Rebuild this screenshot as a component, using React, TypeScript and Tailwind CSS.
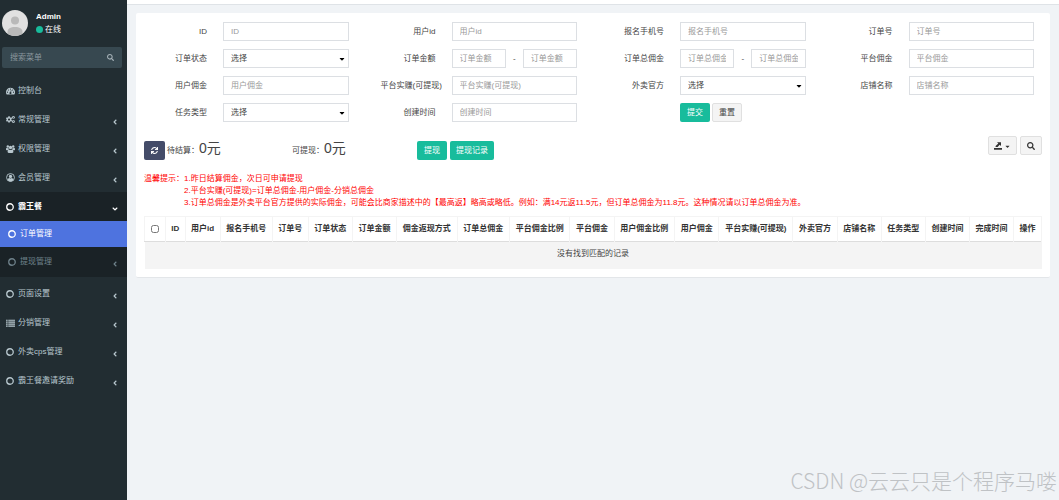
import type { ReactNode } from "react";
import { FaAngleDown, FaAngleLeft, FaCaretDown, FaCogs, FaSearch, FaSync } from "react-icons/fa";

const inputClass =
  "h-[19px] w-full min-w-0 border border-[#dcdfe3] bg-white px-[7px] text-[8px] text-[#444] placeholder:text-[#999] outline-none";

const columns = [
  "ID",
  "用户id",
  "报名手机号",
  "订单号",
  "订单状态",
  "订单金额",
  "佣金返现方式",
  "订单总佣金",
  "平台佣金比例",
  "平台佣金",
  "用户佣金比例",
  "用户佣金",
  "平台实赚(可提现)",
  "外卖官方",
  "店铺名称",
  "任务类型",
  "创建时间",
  "完成时间",
  "操作",
];

function CircleIcon() {
  return (
    <svg viewBox="0 0 16 16" className="size-2 shrink-0" fill="none" stroke="currentColor" strokeWidth="2.600" aria-hidden="true">
      <circle cx="8" cy="8" r="6.500" />
    </svg>
  );
}

function ListIcon() {
  return (
    <svg viewBox="0 0 16 14" className="h-2 w-[9px]" fill="currentColor" aria-hidden="true">
      <path d="M0 1h3v2H0zM4 1h12v2H4zM0 4.500h3v2H0zM4 4.500h12v2H4zM0 8h3v2H0zM4 8h12v2H4zM0 11.500h3v2H0zM4 11.500h12v2H4z" />
    </svg>
  );
}

function DashboardIcon() {
  return (
    <svg viewBox="0 0 16 14" className="h-2 w-[9px]" aria-hidden="true">
      <path d="M8 1a8 8 0 0 0-8 8c0 1.500.4 3 1.200 4.200h13.600A8 8 0 0 0 8 1z" fill="currentColor" />
      <g fill="#222d32">
        <circle cx="2.700" cy="9" r="1" />
        <circle cx="4.300" cy="5.200" r="1" />
        <circle cx="8" cy="3.600" r="1" />
        <circle cx="11.700" cy="5.200" r="1" />
        <circle cx="13.300" cy="9" r="1" />
        <path d="M8.700 5.200l1 .2-.7 3.600a1.900 1.900 0 1 1-1.100-.3z" />
      </g>
    </svg>
  );
}

function GroupIcon() {
  return (
    <svg viewBox="0 0 18 16" className="h-2 w-[9px]" fill="currentColor" aria-hidden="true">
      <circle cx="3.600" cy="3" r="2.400" />
      <circle cx="14.400" cy="3" r="2.400" />
      <circle cx="9" cy="5" r="3.300" />
      <path d="M0 9.500C0 7 .6 5.600 1.500 5.600c1 .8 2.200.9 3.400.6.100 1.200.5 2 1.100 2.800-1.200 0-2 .5-2.600 1.300H1.300C.5 10.300 0 10 0 9.500zM18 9.500c0-2.500-.6-3.900-1.500-3.900-1 .8-2.200.9-3.400.6-.1 1.200-.5 2-1.100 2.800 1.200 0 2 .5 2.600 1.300h2.100c.8 0 1.300-.3 1.300-.8z" />
      <path d="M3.200 13.600c0-2.400.8-4.600 2.800-4.600 1.900 1.500 4.100 1.500 6 0 2 0 2.800 2.200 2.800 4.600 0 1.400-.9 2.200-2.200 2.200H5.400c-1.300 0-2.200-.8-2.200-2.200z" />
    </svg>
  );
}

function UserIcon() {
  return (
    <svg viewBox="0 0 16 16" className="size-[9px]" aria-hidden="true">
      <circle cx="8" cy="8" r="7" fill="none" stroke="currentColor" strokeWidth="1.600" />
      <circle cx="8" cy="6.200" r="2.900" fill="currentColor" />
      <path d="M2.800 12.300C3.300 10 4.700 9 5.900 8.900c1.200.9 3 .9 4.200 0 1.200.1 2.600 1.100 3.100 3.400C11.900 14 10 15 8 15s-3.900-1-5.200-2.700z" fill="currentColor" />
    </svg>
  );
}

function MenuItem({ icon, label, arrow = true }: { icon: ReactNode; label: string; arrow?: boolean }) {
  return (
    <a href="#" className="flex h-[29px] items-center pl-[6px] pr-2 text-[#b8c7ce]">
      <span className="flex w-3 items-center text-[9px]">{icon}</span>
      <span className="flex-1">{label}</span>
      {arrow && <FaAngleLeft className="mt-1 text-[8px]" />}
    </a>
  );
}

function Sidebar() {
  return (
    <aside className="w-[127px] shrink-0 bg-[#222d32]">
      <div className="flex items-center gap-2 px-[2px] pt-[10px]">
        <svg viewBox="0 0 26 26" className="size-[26px] rounded-full" aria-hidden="true">
          <rect width="26" height="26" fill="#e1e1e1" />
          <circle cx="13" cy="10.500" r="4" fill="#b9b9b9" />
          <path d="M5.500 26v-4c0-3.500 3-5 7.500-5s7.500 1.500 7.500 5v4z" fill="#b9b9b9" />
        </svg>
        <div className="leading-[13px] text-white">
          <p className="font-bold">Admin</p>
          <p className="flex items-center gap-[2px]">
            <span className="size-[7px] rounded-full bg-[#18bc9c]" />
            在线
          </p>
        </div>
      </div>

      <form className="ml-[2px] mr-[5px] mt-[11px] flex h-[21px] items-center rounded-xs bg-[#374850] px-2">
        <input
          aria-label="搜索菜单"
          placeholder="搜索菜单"
          className="min-w-0 flex-1 bg-transparent text-[8px] text-white placeholder:text-[#8a979e] outline-none"
        />
        <button type="button" aria-label="搜索" className="text-[#a5b1b7]">
          <FaSearch className="size-[7px]" />
        </button>
      </form>

      <nav className="mt-2">
        <MenuItem icon={<DashboardIcon />} label="控制台" arrow={false} />
        <MenuItem icon={<FaCogs />} label="常规管理" />
        <MenuItem icon={<GroupIcon />} label="权限管理" />
        <MenuItem icon={<UserIcon />} label="会员管理" />
        <a href="#" className="flex h-[29px] items-center bg-[#1a2226] pl-[6px] pr-2 text-white">
          <span className="flex w-3 items-center">
            <CircleIcon />
          </span>
          <span className="flex-1 font-bold">霸王餐</span>
          <FaAngleDown className="mt-1 text-[8px]" />
        </a>
        <div className="bg-[#1a2226]">
          <a href="#" className="flex h-[26px] items-center gap-1 bg-[#4e73df] pl-2 text-white">
            <CircleIcon />
            订单管理
          </a>
          <a href="#" className="flex h-[30px] items-center gap-1 pl-2 pr-2 text-[#6f828b]">
            <CircleIcon />
            <span className="flex-1">提现管理</span>
            <FaAngleLeft className="mt-1 text-[8px]" />
          </a>
        </div>
        <div className="mt-[2px]">
          <MenuItem icon={<CircleIcon />} label="页面设置" />
          <MenuItem icon={<ListIcon />} label="分销管理" />
          <MenuItem icon={<CircleIcon />} label="外卖cps管理" />
          <MenuItem icon={<CircleIcon />} label="霸王餐邀请奖励" />
        </div>
      </nav>
    </aside>
  );
}

function Field({ id, label, children }: { id: string; label: string; children?: ReactNode }) {
  return (
    <div className="flex items-center gap-4 px-4">
      <label htmlFor={id} className="w-[55px] shrink-0 whitespace-nowrap text-right">
        {label}
      </label>
      <div className="min-w-0 flex-1">{children ?? <input id={id} placeholder={label} className={inputClass} />}</div>
    </div>
  );
}

function SelectBox({ id }: { id: string }) {
  return (
    <div className="relative">
      <select id={id} className={`${inputClass} block appearance-none`}>
        <option>选择</option>
      </select>
      <FaCaretDown className="pointer-events-none absolute right-[3px] top-[6px] size-2 text-black" />
    </div>
  );
}

function RangeBox({ id, label }: { id: string; label: string }) {
  return (
    <div className="flex items-center">
      <input id={id} placeholder={label} className={inputClass} />
      <span className="w-[17px] shrink-0 text-center">-</span>
      <input aria-label={label} placeholder={label} className={inputClass} />
    </div>
  );
}

function SearchForm() {
  return (
    <form className="grid grid-cols-4 gap-y-2">
      <Field id="f-id" label="ID" />
      <Field id="f-user" label="用户id" />
      <Field id="f-phone" label="报名手机号" />
      <Field id="f-no" label="订单号" />
      <Field id="f-status" label="订单状态">
        <SelectBox id="f-status" />
      </Field>
      <Field id="f-amount" label="订单金额">
        <RangeBox id="f-amount" label="订单金额" />
      </Field>
      <Field id="f-total" label="订单总佣金">
        <RangeBox id="f-total" label="订单总佣金" />
      </Field>
      <Field id="f-platform" label="平台佣金" />
      <Field id="f-commission" label="用户佣金" />
      <Field id="f-profit" label="平台实赚(可提现)" />
      <Field id="f-source" label="外卖官方">
        <SelectBox id="f-source" />
      </Field>
      <Field id="f-shop" label="店铺名称" />
      <Field id="f-type" label="任务类型">
        <SelectBox id="f-type" />
      </Field>
      <Field id="f-time" label="创建时间" />
      <div className="flex gap-[2px] pl-[87px]">
        <button type="button" className="h-[19px] rounded-xs bg-[#18bc9c] px-[7px] text-white">
          提交
        </button>
        <button type="button" className="h-[19px] rounded-xs border border-[#e0e0e0] bg-[#f4f4f4] px-[6px]">
          重置
        </button>
      </div>
    </form>
  );
}

function Toolbar() {
  return (
    <div className="mt-[14px] flex items-start justify-between">
      <div className="mt-[5px] flex h-[19px] items-center">
        <button type="button" aria-label="刷新" className="flex h-[19px] w-[21px] items-center justify-center rounded-xs bg-[#444c69] text-white">
          <FaSync className="size-[7px]" />
        </button>
        <p className="ml-[2px] flex w-[125px] items-baseline pb-1">
          待结算：<span className="text-[14px] leading-[19px]">0元</span>
        </p>
        <p className="flex w-[125px] items-baseline pb-1">
          可提现：<span className="text-[14px] leading-[19px]">0元</span>
        </p>
        <div className="flex gap-[3px]">
          <button type="button" className="h-[19px] rounded-xs bg-[#18bc9c] px-[7px] text-white">
            提现
          </button>
          <button type="button" className="h-[19px] rounded-xs bg-[#18bc9c] px-[6px] text-white">
            提现记录
          </button>
        </div>
      </div>
      <div className="flex gap-[3px]">
        <button type="button" aria-label="导出" className="flex h-[19px] w-[29px] items-center justify-center gap-[2px] rounded-xs border border-[#e0e0e0] bg-[#f4f4f4] text-[#333]">
          <svg viewBox="0 0 8 8" className="size-2" fill="currentColor" aria-hidden="true">
            <path d="M0 6h8v1.700H0zM3 0.300h4v3.700L5.700 2.800 3.600 5H1.600V3.900L4.300 1.500z" />
          </svg>
          <FaCaretDown className="mt-[2px] size-[7px]" />
        </button>
        <button type="button" aria-label="搜索" className="flex h-[19px] w-[22px] items-center justify-center rounded-xs border border-[#e0e0e0] bg-[#f4f4f4] text-[#333]">
          <FaSearch className="size-2" />
        </button>
      </div>
    </div>
  );
}

function OrderTable() {
  return (
    <table className="w-full border-collapse text-center">
      <thead>
        <tr className="h-[25px] border border-b-[#ddd] border-[#f4f4f4]">
          <th className="w-[21px] border-r border-[#f4f4f4]">
            <input type="checkbox" aria-label="全选" className="mx-auto block size-2" />
          </th>
          {columns.map((name) => (
            <th key={name} className="whitespace-nowrap border-r border-[#f4f4f4] px-[5px] font-bold text-[#333]">
              {name}
            </th>
          ))}
        </tr>
      </thead>
      <tbody>
        <tr className="h-[27px] bg-[#f4f4f4]">
          <td colSpan={columns.length + 1} className="pb-[3px]">
            没有找到匹配的记录
          </td>
        </tr>
      </tbody>
    </table>
  );
}

export default function App() {
  return (
    <div className="relative flex min-h-screen bg-[#f0f3f6] font-['Liberation_Sans','Noto_Sans_CJK_SC',sans-serif] text-[8px] leading-3 text-[#444]">
      <Sidebar />
      <div className="min-w-0 flex-1">
        <header className="h-[5px] border-b border-[#dfe3e7] bg-white" />
        <main className="mx-[9px] mt-2 rounded-xs border-b border-[#e3e6e9] bg-white pb-2 pt-[9px]">
          <SearchForm />
          <div className="px-2">
            <Toolbar />
            <div className="mb-[7px] mt-[13px] flex text-[#f00]">
              <span className="w-10 shrink-0">温馨提示：</span>
              <div>
                <p>1.昨日结算佣金，次日可申请提现</p>
                <p>2.平台实赚(可提现)=订单总佣金-用户佣金-分销总佣金</p>
                <p>3.订单总佣金是外卖平台官方提供的实际佣金，可能会比商家描述中的【最高返】略高或略低。例如：满14元返11.5元，但订单总佣金为11.8元。这种情况请以订单总佣金为准。</p>
              </div>
            </div>
            <OrderTable />
          </div>
        </main>
      </div>
      <span className="absolute bottom-[6px] right-[2px] whitespace-nowrap font-['Noto_Sans_CJK_SC',sans-serif] text-[21px] font-light leading-7 text-[#bfc2c5]">
        CSDN @云云只是个程序马喽
      </span>
    </div>
  );
}
